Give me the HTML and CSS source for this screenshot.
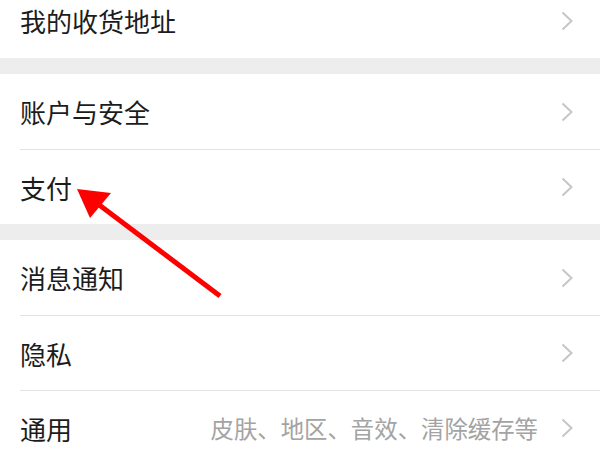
FILE: index.html
```html
<!DOCTYPE html>
<html lang="zh-CN">
<head>
    <meta charset="UTF-8">
    <meta name="viewport" content="width=device-width, initial-scale=1.0">
    <title>设置</title>

    <link rel="stylesheet" href="styles.css">
</head>
<body>
    <!-- contenido -->

    <div id="settings">
        <div class="group">
            <div class="item">
                <div class="itemInner">
                    <span class="label">我的收货地址</span>
                    <svg class="chevron" viewBox="0 0 12 20"><polyline points="1.5,1.5 10.5,10 1.5,18.5"/></svg>
                </div>
            </div>
        </div>

        <div class="group">
            <div class="item">
                <div class="itemInner">
                    <span class="label">账户与安全</span>
                    <svg class="chevron" viewBox="0 0 12 20"><polyline points="1.5,1.5 10.5,10 1.5,18.5"/></svg>
                </div>
            </div>
            <div class="item">
                <div class="itemInner">
                    <span class="label">支付</span>
                    <svg class="chevron" viewBox="0 0 12 20"><polyline points="1.5,1.5 10.5,10 1.5,18.5"/></svg>
                </div>
            </div>
        </div>

        <div class="group">
            <div class="item">
                <div class="itemInner">
                    <span class="label">消息通知</span>
                    <svg class="chevron" viewBox="0 0 12 20"><polyline points="1.5,1.5 10.5,10 1.5,18.5"/></svg>
                </div>
            </div>
            <div class="item">
                <div class="itemInner">
                    <span class="label">隐私</span>
                    <svg class="chevron" viewBox="0 0 12 20"><polyline points="1.5,1.5 10.5,10 1.5,18.5"/></svg>
                </div>
            </div>
            <div class="item">
                <div class="itemInner">
                    <span class="label">通用</span>
                    <span class="hint">皮肤、地区、音效、清除缓存等</span>
                    <svg class="chevron" viewBox="0 0 12 20"><polyline points="1.5,1.5 10.5,10 1.5,18.5"/></svg>
                </div>
            </div>
        </div>

        <!-- flecha roja -->
        <svg class="pointer" width="600" height="450" viewBox="0 0 600 450">
            <line x1="220" y1="296" x2="98" y2="204" stroke="#ff0000" stroke-width="5" stroke-linecap="butt"/>
            <polygon points="77,189 111,193 90,218" fill="#ff0000"/>
        </svg>
    </div>
</body>
</html>
```

FILE: styles.css
```css
body {
    margin: 0;
    background-color: #ededed;
    font-family: "Noto Sans CJK SC", "Noto Sans", sans-serif;
    overflow: hidden;
}

#settings {
    position: relative;
    display: flow-root;
    width: 600px;
}

.group {
    background-color: white;
    margin-bottom: 16px;
}

.group:first-child {
    margin-top: -17px;
}

.group:last-of-type {
    margin-bottom: 0;
}

.item {
    padding-left: 20px;
}

.itemInner {
    display: flex;
    align-items: center;
    height: 75px;
    box-sizing: border-box;
    padding-right: 27px;
}

.item + .item .itemInner {
    border-top: 1px solid #e3e3e3;
}

.label {
    flex: 1;
    font-size: 26px;
    color: #1c1c1c;
}

.hint {
    font-size: 23.4px;
    color: #a3a3a3;
    margin-right: 23px;
}

.chevron {
    width: 12px;
    height: 20px;
    fill: none;
    stroke: #c6c6c6;
    stroke-width: 2;
}

.pointer {
    position: absolute;
    left: 0;
    top: 0;
    pointer-events: none;
}
```
